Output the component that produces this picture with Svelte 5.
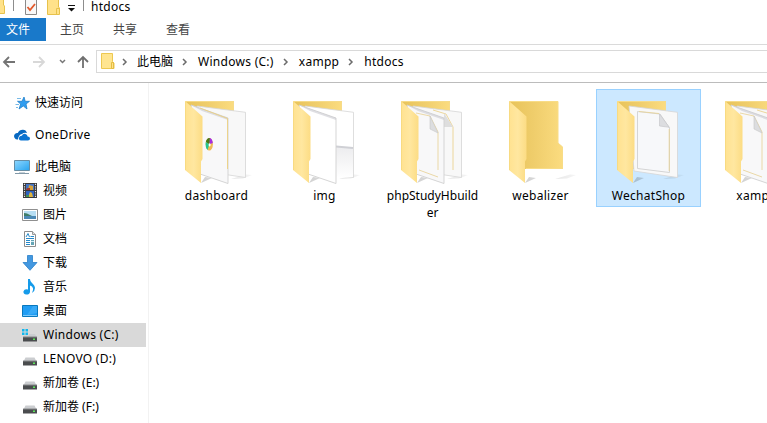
<script>
  const tabs = ['主页', '共享', '查看'];
  const crumbs = ['此电脑', 'Windows (C:)', 'xampp', 'htdocs'];
  const places = [
    { name: '视频', icon: 'video' },
    { name: '图片', icon: 'picture' },
    { name: '文档', icon: 'doc' },
    { name: '下载', icon: 'down' },
    { name: '音乐', icon: 'music' },
    { name: '桌面', icon: 'desktop' },
    { name: 'Windows (C:)', icon: 'drive', system: true, active: true },
    { name: 'LENOVO (D:)', icon: 'drive' },
    { name: '新加卷 (E:)', icon: 'drive' },
    { name: '新加卷 (F:)', icon: 'drive' }
  ];
  const folders = [
    { name: 'dashboard', kind: 'logo' },
    { name: 'img', kind: 'img' },
    { name: 'phpStudyHbuilder', kind: 'docs' },
    { name: 'webalizer', kind: 'empty' },
    { name: 'WechatShop', kind: 'single', selected: true },
    { name: 'xampp', kind: 'docs' }
  ];
  const isLatin = (text) => /^[\x20-\x7e]+$/.test(text);
</script>

{#snippet miniFolder()}
  <svg class="mini" width="14" height="18" viewBox="0 0 14 18">
    <path d="M.5 .5H11.5V8.5L13 10V15.5H.5Z" fill="#ffe28a" stroke="#edc850" />
    <path d="M1 1H11V15H1Z" fill="#ffe590" />
    <path d="M10.5 15.5V9.5H12.5V15.5Z" fill="#ffe28a" stroke="#e5bd42" />
  </svg>
{/snippet}

{#snippet chevron()}
  <svg class="chev" width="6" height="8" viewBox="0 0 6 8"><path d="M1 1L4 4L1 7" fill="none" stroke="#6c6c6c" stroke-width="1.5" /></svg>
{/snippet}

{#snippet folder(kind)}
  <svg class="folder" width="70" height="86" viewBox="0 0 70 86">
    <path d="M46 78L61 73.5L67 74L58 77.5ZM16 82L20 76L27 77Z" fill="url(#shade)" />
    {#if kind === 'empty'}
      <path d="M0 0H49V42L54 46V68H0Z" fill="url(#inside)" />
      <path d="M0 .5H49V42L53.5 46V67.5H17" fill="none" stroke="#f8dc87" />
    {:else}
      <path d="M0 0H49V68H0Z" fill="url(#inside)" />
      <path d="M0 .5H48.5V10" fill="none" stroke="#f6db89" />
      <path d="M12 5L60.5 11.3V76.5L17 70Z" fill={kind === 'img' ? '#fff' : '#f8f8f8'} stroke="#d6d6d6" stroke-width=".8" />
      {#if kind === 'img'}
        <path d="M43 45L60 47V76L43 77Z" fill="url(#paper)" />
        <path d="M43 45.5L60 47" stroke="#cfd0d5" stroke-width="2" />
      {/if}
      {#if kind === 'docs'}
        <path d="M32 9L45 13L52 26V69" fill="none" stroke="#e8cd83" stroke-width=".8" />
        <path d="M43 12L52 26H43Z" fill="#dedede" />
      {/if}
      {#if kind === 'single'}
        <path d="M20.5 10.5L43 13L52.5 27V71.5L20.5 67.5Z" fill="#f7f8fa" stroke="#d0d0d0" stroke-width=".9" />
        <path d="M22 10.5L42 12.5M52.2 28V70" stroke="#ead391" stroke-width=".8" fill="none" />
        <path d="M42.5 13L52.3 26.3L42.5 25Z" fill="#dcdde0" stroke="#c2c3c6" stroke-width=".6" />
      {:else}
        <path d="M6 4L43 17V82.5L15 73Z" fill={kind === 'img' ? '#fff' : '#f8f8f9'} stroke="#d0d0d0" stroke-width=".9" />
        <path d="M6 4L43 17V19L17 10Z" fill="#c9cad0" opacity=".6" />
      {/if}
      {#if kind === 'logo'}
        <path d="M15 7L42.5 17.5V68" fill="none" stroke="#ecd080" stroke-width=".9" />
        <ellipse cx="24.3" cy="43.3" rx="3.6" ry="6.3" fill="#efb955" />
        <path d="M24.3 43.3V37A3.6 6.3 0 0 1 27.8 42Z" fill="#a62be0" />
        <path d="M24.3 43.3L20.8 41Q22 36.5 24.8 37Z" fill="#477b16" />
        <path d="M24.3 43.3L22.5 49Q20 46 20.8 41Z" fill="#22c58e" />
        <ellipse cx="24.6" cy="43.8" rx="1" ry="1.6" fill="#fff" />
      {/if}
      {#if kind === 'docs'}
        <path d="M15 12L29 15L37 31V69M18 69L37 76" fill="none" stroke="#e6cf92" stroke-width=".8" />
        <path d="M29 15L37 32L29 28Z" fill="#dcdddf" stroke="#c7c7c7" stroke-width=".6" />
      {/if}
    {/if}
    <path d="M0 0L17.5 15.5V58L16 60.5V82L0 69Z" fill="url(#flap)" />
    <path d="M.4 1V69" stroke="#f4d57b" stroke-width=".7" />
  </svg>
{/snippet}

{#snippet placeIcon(kind, system)}
  <svg class="pic" width="16" height="16" viewBox="0 0 16 16">
    {#if kind === 'video'}
      <path d="M1 0H15V15H1Z" fill="#3a3a3c" />
      <path d="M4 1H12V7H4Z" fill="#4474c5" /><path d="M4 8H12V14H4Z" fill="#2f63c0" />
      <path d="M7 2L11 3L11 7H6Z" fill="#d6a13a" /><path d="M5 5H8V7H4Z" fill="#a1392e" />
      <path d="M8 9L10 10L11 14H6Z" fill="#dfb43c" /><path d="M4 12H7V14H4Z" fill="#3f8f58" />
      <path d="M2.5 .8V15M13.5 .8V15" stroke="#e8e8e8" stroke-width="1.2" stroke-dasharray="1.2 1.2" />
    {:else if kind === 'picture'}
      <path d="M.5 2.5H15.5V13.5H.5Z" fill="#fff" stroke="#8f8f8f" />
      <path d="M2 4H14V12H2Z" fill="#b7def3" />
      <path d="M2 6Q5 6 8 8T14 9V10H2Z" fill="#3f7d68" /><path d="M2 9H14V12H2Z" fill="#4c89b5" />
    {:else if kind === 'doc'}
      <path d="M2.5 .5H10.5L13.5 3.5V15.5H2.5Z" fill="#fff" stroke="#8c8c8c" />
      <path d="M10.5 .5V3.5H13.5" fill="#e1e1e1" stroke="#9a9a9a" />
      <path d="M4 6L6 2.5L7.5 6M8.5 5.5H12M4 7.5H12M4 9.5H8M4 11.5H8M4 13.5H8" fill="none" stroke="#2689c9" />
      <path d="M9 9H12V14H9Z" fill="#65a5b5" /><path d="M9 10H12V11H9Z" fill="#d6edf7" />
    {:else if kind === 'down'}
      <path d="M5.5 .5H10.5V7.5H15L8 15.3L1 7.5H5.5Z" fill="#4398e0" stroke="#287fc9" stroke-width=".8" />
    {:else if kind === 'music'}
      <path d="M6 0H8C8 4 13 5 13 9Q13 12 10 14Q13 8 8 6.5V13A3.3 2.6 0 1 1 6 10.6Z" fill="#159bea" />
    {:else if kind === 'desktop'}
      <path d="M.5 2.5H15.5V13.5H.5Z" fill="#209df4" stroke="#0878bd" />
      <path d="M11 3H15V10L5 12Z" fill="#50b7fa" opacity=".5" />
      <path d="M1.5 12.5H14.5" stroke="#d9f2ff" stroke-dasharray="1 1" />
    {:else}
      {#if system}
        <path d="M0 2H2.5V4.5H0ZM3.5 2H6V4.5H3.5ZM0 5.5H2.5V8H0ZM3.5 5.5H6V8H3.5Z" fill="#12b7ed" />
      {/if}
      <path d={system ? 'M7 7H13L14.5 10H1.5L2.5 8.5H7Z' : 'M3.5 6.5H12.5L14.5 10.5H1.5Z'} fill="#cbcdd0" />
      <path d="M1 10H15V14.5H1Z" fill="#4a4c4e" /><path d="M1 10H15" stroke="#858789" />
      <path d="M11 12.3H13" stroke="#5ce95a" stroke-width="1.4" />
    {/if}
  </svg>
{/snippet}

<div class="window">
  <svg class="defs" width="0" height="0" aria-hidden="true">
    <defs>
      <linearGradient id="inside"><stop offset="0" stop-color="#e8c35a" /><stop offset=".45" stop-color="#efcd6b" /><stop offset="1" stop-color="#fbdc80" /></linearGradient>
      <linearGradient id="flap"><stop offset="0" stop-color="#ffe290" /><stop offset=".5" stop-color="#ffe7a0" /><stop offset="1" stop-color="#fcdc84" /></linearGradient>
      <linearGradient id="paper" x2="0" y2="1"><stop offset="0" stop-color="#ececee" /><stop offset="1" stop-color="#fff" /></linearGradient>
      <linearGradient id="shade"><stop offset="0" stop-color="#000" stop-opacity=".18" /><stop offset="1" stop-color="#000" stop-opacity=".04" /></linearGradient>
      <linearGradient id="screen" x2="1" y2="1"><stop offset="0" stop-color="#8ed7ff" /><stop offset="1" stop-color="#28a4ef" /></linearGradient>
    </defs>
  </svg>

  <header class="title">
    <svg width="91" height="18" viewBox="0 0 91 18">
      <path d="M-5-2H3.5V5L4.5 6V13.5H-5Z" fill="#ffe28a" stroke="#e7c24c" />
      <path d="M13.5 0V11M83.5 0V11" stroke="#8d8d8d" />
      <path d="M25.5-3H36.5V14.5H25.5Z" fill="#f8f8f8" stroke="#8a8a8a" />
      <path d="M27.5 7L30 10L35 4" fill="none" stroke="#e2592b" stroke-width="1.8" />
      <path d="M47.5-2H58.5V7L59.5 8V14.5H47.5Z" fill="#ffe28a" stroke="#e7c24c" />
      <path d="M56.5 14V8.5H59" fill="none" stroke="#e7c24c" />
      <path d="M68 5.5H75" stroke="#111" /><path d="M68 8H75L71.5 11.5Z" fill="#111" />
    </svg>
    <span class="latin">htdocs</span>
  </header>

  <nav class="tabs">
    <span class="file">文件</span>
    {#each tabs as tab}<span class="tab">{tab}</span>{/each}
  </nav>

  <div class="address">
    <svg width="96" height="36" viewBox="0 0 96 36" fill="none">
      <path d="M15 17H4M9 12L4 17L9 22" stroke="#747474" stroke-width="1.8" />
      <path d="M33 17H44M39 12L44 17L39 22" stroke="#d8d8d8" stroke-width="1.8" />
      <path d="M60 15L62.5 17.5L65 15" stroke="#777" stroke-width="1.5" />
      <path d="M83 23V12M78 17L83 12L88 17" stroke="#6f6f6f" stroke-width="1.8" />
    </svg>
    <div class="path">
      {@render miniFolder()}
      {#each crumbs as crumb}
        <div class="crumb">{@render chevron()}<span class:latin={isLatin(crumb)}>{crumb}</span></div>
      {/each}
    </div>
  </div>

  <main>
    <aside>
      <div class="root">
        <svg width="16" height="16" viewBox="0 0 16 16">
          <path d="M10 2L11.2 6.3H15.5L12 9L13 14L9.3 11L5 14L6.7 9L3.5 6.3H8Z" fill="#2f9df0" stroke="#2080cc" stroke-width=".8" />
          <path d="M3 3.5H7M1.5 9.5H5M2 12.5H4" stroke="#77b9e6" />
        </svg>
        <span>快速访问</span>
      </div>
      <div class="root">
        <svg width="16" height="16" viewBox="0 0 16 16">
          <path d="M4 12.5A3.4 3.4 0 0 1 .7 7.2Q2 5.8 3.8 6Q5.5 2.5 9 2.7Q12 2.8 13 6Q10 5 8 7Q4.5 7.5 4 12.5Z" fill="#0869c1" />
          <path d="M7 13.5Q4.5 13.2 5 10.7Q5.5 8.7 7.8 8.8Q9 6.3 11.5 7Q13.5 7.5 13.6 9.5Q16 9.5 16 11.6Q16 13.5 14 13.5Z" fill="#0b74d1" />
        </svg>
        <span class="latin">OneDrive</span>
      </div>
      <div class="root">
        <svg width="16" height="16" viewBox="0 0 16 16">
          <path d="M.5 1.5H15.5V11.5H.5Z" fill="url(#screen)" stroke="#668da4" />
          <path d="M5 13.5H11" stroke="#c5d0d8" /><path d="M1 14.5H15" stroke="#8299a8" />
        </svg>
        <span>此电脑</span>
      </div>
      {#each places as place}
        <div class="place" class:active={place.active}>
          {@render placeIcon(place.icon, place.system)}
          <span class:latin={isLatin(place.name)}>{place.name}</span>
        </div>
      {/each}
    </aside>
    <section>
      {#each folders as item}
        <div class="tile" class:selected={item.selected}>
          {@render folder(item.kind)}
          <span class:latin={item.name.length < 14}>{item.name}</span>
        </div>
      {/each}
    </section>
  </main>
</div>

<style>
  .window {
    width: 767px;
    height: 423px;
    overflow: hidden;
    display: flex;
    flex-direction: column;
    background: #fff;
    color: #000;
    font: 12px/17px "Noto Sans", "Noto Sans CJK SC", sans-serif;
  }
  svg { display: block; flex: none; }
  .defs { height: 0; }
  .latin { letter-spacing: .28px; }
  .title { display: flex; height: 18px; flex: none; }
  .title span { line-height: 13px; }
  .tabs {
    display: flex;
    height: 26px;
    flex: none;
    border-bottom: 1px solid #dadada;
    line-height: 24px;
    color: #444;
  }
  .file {
    box-sizing: border-box;
    width: 46px;
    height: 23px;
    padding-left: 6px;
    margin-right: 14px;
    background: #1979ca;
    color: #fff;
  }
  .tab { width: 53px; }
  .address {
    display: flex;
    height: 37px;
    flex: none;
    border-bottom: 1px solid #bcbcbc;
  }
  .path {
    box-sizing: border-box;
    display: flex;
    align-items: center;
    flex: 1;
    height: 23px;
    margin-top: 5px;
    padding-left: 4px;
    border: 1px solid #d9d9d9;
    border-right: 0;
    white-space: nowrap;
  }
  .crumb { display: flex; align-items: center; gap: 10px; padding-left: 9px; }
  .crumb:nth-of-type(1) { gap: 9px; padding-left: 7px; }
  .path span { line-height: 20px; }
  main { display: flex; flex: 1; min-height: 0; }
  aside {
    box-sizing: border-box;
    width: 149px;
    flex: none;
    padding-top: 8px;
    border-right: 1px solid #f2f2f2;
  }
  aside span { padding-bottom: 2px; }
  .root {
    display: flex;
    align-items: center;
    gap: 5px;
    height: 24px;
    margin-bottom: 8px;
    padding-left: 14px;
  }
  .root:nth-child(3) { margin-bottom: 0; }
  .place {
    display: flex;
    align-items: center;
    gap: 5px;
    width: 124px;
    height: 24px;
    padding-left: 22px;
  }
  .active { background: #d9d9d9; }
  section {
    display: flex;
    gap: 3px;
    flex: 1;
    min-width: 0;
    overflow: hidden;
    padding: 6px 0 0 15px;
  }
  .tile {
    box-sizing: border-box;
    display: flex;
    flex-direction: column;
    flex: none;
    width: 105px;
    height: 118px;
    padding: 11px 4px 0;
    border: 1px solid transparent;
    text-align: center;
    overflow-wrap: anywhere;
  }
  .tile .folder { margin-left: 16px; }
  .selected { background: #cce8ff; border-color: #99d1ff; }
</style>
